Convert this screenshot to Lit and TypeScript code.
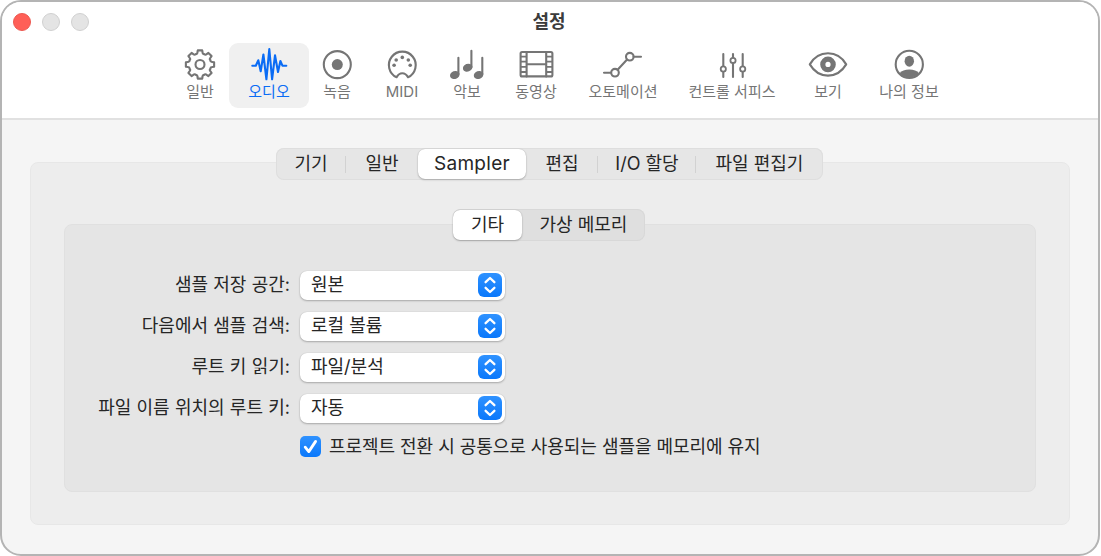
import { LitElement, html, svg, css, nothing } from "lit";
import { customElement, property, state } from "lit/decorators.js";
import { classMap } from "lit/directives/class-map.js";

const polar = (radius: number, deg: number) => {
    const a = (deg - 90) * Math.PI / 180;
    return `${(20 + radius * Math.cos(a)).toFixed(2)} ${(17.5 + radius * Math.sin(a)).toFixed(2)}`;
}

// eight teeth with rounded valleys between them
const gearPath = () => {
    let d = '';
    for (let i = 0; i < 8; i++) {
        const a = i * 45;
        d += `${i ? 'L' : 'M'}${polar(14.3, a - 9)} L${polar(14.3, a + 9)} L${polar(12.3, a + 12)} `;
        d += `Q${polar(10.6, a + 15)} ${polar(11.3, a + 22.5)} Q${polar(10.6, a + 30)} ${polar(12.3, a + 33)} `;
    }
    return d + 'Z';
}

const icons: Record<string, unknown> = {
    general: svg`<path d=${gearPath()}/><circle cx="20" cy="17.5" r="4.5"/>`,
    audio: svg`<path d="M3.3 18.7H6.8L9.3 13.3L11.7 24.3L14.4 7.5L17.4 32.3L20.3 2L23.1 32.3L26 8.3L29 25L31.4 14L33.4 18.7H37.3"/>`,
    record: svg`<circle cx="20.3" cy="17.6" r="13.5"/><circle class="fill" cx="20.3" cy="17.6" r="5.5"/>`,
    midi: svg`
        <path d="M14.6 30.2A13.4 13.4 0 1 1 26 30.2C24.6 27.6 23 26.2 20.3 26.2C17.6 26.2 16 27.6 14.6 30.2Z"/>
        <g class="fill">
            <circle cx="12.1" cy="18.3" r="1.8"/><circle cx="14.2" cy="13" r="1.8"/>
            <circle cx="20.3" cy="10.4" r="1.8"/><circle cx="26.3" cy="13" r="1.8"/>
            <circle cx="28.2" cy="18.3" r="1.8"/>
        </g>`,
    score: svg`
        <path d="M11.4 10.8V27M24.4 3.7V20M35.3 10.8V27"/>
        <g class="fill">
            <ellipse cx="7.8" cy="28" rx="4.9" ry="3.9" transform="rotate(-20 7.8 28)"/>
            <ellipse cx="20.7" cy="20.7" rx="4.9" ry="3.9" transform="rotate(-20 20.7 20.7)"/>
            <ellipse cx="31.6" cy="28" rx="4.9" ry="3.9" transform="rotate(-20 31.6 28)"/>
        </g>`,
    movie: svg`
        <rect x="4.6" y="5" width="31.8" height="24.4" rx="1.5"/>
        <path d="M10.6 5V29.4M30.2 5V29.4M10.6 17.2H30.2"/>
        <path class="thin" d="M5 9.6H10M5 14.6H10M5 19.8H10M5 25H10M31 9.6H36M31 14.6H36M31 19.8H36M31 25H36"/>`,
    automation: svg`
        <path d="M1 25.7H8M14.6 22.8L24.1 12.5M30.6 9.7H38"/>
        <circle cx="12" cy="25.7" r="3.8"/><circle cx="26.8" cy="9.7" r="3.8"/>`,
    surfaces: svg`
        <path d="M11.3 7V18.8M11.3 25V30M21 7V10.2M21 16.4V30M30.7 7V18.8M30.7 25V30"/>
        <circle class="thin" cx="11.3" cy="22" r="2.6"/><circle class="thin" cx="21" cy="13.4" r="2.6"/>
        <circle class="thin" cx="30.7" cy="22" r="2.6"/>`,
    view: svg`
        <path d="M1.8 17.4C5.5 11 12 6.3 20 6.3S34.5 11 38.2 17.4C34.5 23.6 28 28.6 20 28.6S5.5 23.6 1.8 17.4Z"/>
        <circle class="pupil" cx="20" cy="17.4" r="5.2"/>`,
    profile: svg`
        <circle cx="20.3" cy="17.4" r="13.6"/>
        <ellipse class="fill" cx="20.3" cy="14.2" rx="4.7" ry="5.5"/>
        <path class="fill" d="M10.6 26.3C12.5 23.8 16 22.6 20.3 22.6S28.1 23.8 30 26.3A13.2 13.2 0 0 1 10.6 26.3Z"/>`
}

@customElement('segmented-tabs')
export class SegmentedTabs extends LitElement{
    static styles = css`
        :host{
            display: block;
        }

        .track{
            display: grid;
            box-sizing: border-box;
            height: 32px;
            border-radius: 8px;
            background: #e6e6e6;
            box-shadow: inset 0 0 0 1px #dedede;
        }

        .main{
            grid-template-columns: 70px 72px 108px 72px 98px 127px;
        }

        .sub{
            background: #dfdfdf;
            box-shadow: inset 0 0 0 1px #d8d8d8;
            grid-template-columns: 69px 123px;
        }

        .tab{
            margin: 1px 0;
            height: 30px;
            line-height: 29px;
            text-align: center;
            white-space: nowrap;
            cursor: default;
        }

        .latin{
            font-size: 19px;
            letter-spacing: 0.3px;
        }

        .divided{
            background: linear-gradient(#d2d2d2, #d2d2d2) right center / 1px 17px no-repeat;
        }

        .selected{
            background: white;
            border-radius: 7px;
            box-shadow: 0 0 1px rgba(0, 0, 0, 0.25), 0 1px 2px rgba(0, 0, 0, 0.22);
        }
    `

    @property({ attribute: false })
    tabs: string[] = [];

    @property()
    kind = 'main';

    @property({ type: Number })
    selected = 0;

    render() {
        return html`
            <div class="track ${this.kind}">
                ${this.tabs.map((tab, i) => html`
                    <div class=${classMap({
                            tab: true,
                            latin: /^[a-z]+$/i.test(tab),
                            selected: i === this.selected,
                            divided: i !== this.selected && i + 1 !== this.selected && i < this.tabs.length - 1
                         })}
                         @click=${() => this.selected = i}>${tab}</div>
                `)}
            </div>
        `
    }
}

@customElement('popup-row')
export class PopupRow extends LitElement{
    static styles = css`
        :host{
            display: grid;
            grid-template-columns: 225px 205px;
            column-gap: 10px;
            height: 29px;
            line-height: 28px;
        }

        .label{
            text-align: right;
            white-space: nowrap;
            word-spacing: 0.2px;
        }

        .popup{
            display: flex;
            justify-content: space-between;
            box-sizing: border-box;
            padding: 2px 3px 3px 11px;
            border-radius: 7px;
            background: white;
            box-shadow: 0 0 1px rgba(0, 0, 0, 0.2), 0 1px 2px rgba(0, 0, 0, 0.25);
        }

        .value{
            line-height: 24px;
        }

        svg{
            width: 24px;
            height: 24px;
            border-radius: 6px;
            background: linear-gradient(#2f92ff, #0a78fb);
            fill: none;
            stroke: white;
            stroke-width: 2.3;
            stroke-linecap: round;
            stroke-linejoin: round;
        }
    `

    @property()
    label!: string;

    @property()
    value!: string;

    render() {
        return html`
            <div class="label">${this.label}:</div>
            <div class="popup">
                <span class="value">${this.value}</span>
                <svg viewBox="0 0 24 24"><path d="M7.6 9.2L12 5L16.4 9.2M7.6 14.8L12 19L16.4 14.8"/></svg>
            </div>
        `
    }
}

@customElement('app-root')
export class AppRoot extends LitElement{
    static styles = css`
        :host{
            display: block;
            width: 1101px;
            height: 556px;
            background: white;
            font-family: Inter, "Noto Sans CJK KR", sans-serif;
            font-size: 18px;
            color: #262626;
            user-select: none;
        }

        .window{
            display: flex;
            flex-direction: column;
            box-sizing: border-box;
            width: 1100px;
            height: 556px;
            border: 2px solid #b4b4b4;
            border-radius: 21px;
            background: #f5f5f5;
            overflow: hidden;
        }

        header{
            flex: none;
            box-sizing: border-box;
            height: 118px;
            background: white;
            border-bottom: 2px solid #e1e1e1;
        }

        .titlebar{
            display: grid;
            grid-template-columns: 1fr auto 1fr;
            align-items: center;
            height: 40px;
            padding: 0 13px 0 11px;
        }

        .lights{
            display: flex;
            gap: 11px;
        }

        .light{
            box-sizing: border-box;
            width: 18px;
            height: 18px;
            border-radius: 50%;
            background: #e4e4e4;
            border: 1px solid #d0d0d0;
        }

        .close{
            background: #ff5f57;
            border-color: #ec5850;
        }

        h1{
            margin: 0;
            font-size: 18px;
            line-height: 24px;
            font-weight: 700;
            color: #3c3c3c;
        }

        nav{
            display: grid;
            grid-template-columns: 58px 80px 56px 74px 56px 82px 92px 126px 66px 96px;
            padding: 1px 0 0 169px;
        }

        .item{
            display: flex;
            flex-direction: column;
            align-items: center;
            box-sizing: border-box;
            height: 65px;
            padding-top: 4px;
            border-radius: 9px;
            font-size: 15px;
            line-height: 22px;
            color: #757575;
            white-space: nowrap;
        }

        .item svg{
            width: 40px;
            height: 34px;
            fill: none;
            stroke: currentColor;
            stroke-width: 2.1;
            stroke-linecap: round;
            stroke-linejoin: round;
        }

        .item .fill{
            fill: currentColor;
            stroke: none;
        }

        .item .thin{
            stroke-width: 1.8;
        }

        .item .pupil{
            stroke-width: 5.2;
        }

        .active{
            background: #f0f0f0;
            color: #0a6cf5;
        }

        main{
            padding: 42px 28px 0;
        }

        .outer, .inner{
            display: flex;
            flex-direction: column;
            align-items: center;
            box-sizing: border-box;
            border-radius: 8px;
        }

        .outer{
            height: 363px;
            padding: 0 33px;
            background: #ededed;
            border: 1px solid #e7e7e7;
        }

        .inner{
            align-self: stretch;
            height: 268px;
            margin-top: 44px;
            background: #e5e5e5;
            border: 1px solid #e0e0e0;
        }

        /* tab bars straddle the top edge of their panel */
        .main-tabs{
            margin: -15px 1px 0 0;
        }

        .sub-tabs{
            margin: -16px 2px 0 0;
        }

        .form{
            display: flex;
            flex-direction: column;
            gap: 12px;
            align-self: flex-start;
            margin-top: 30px;
        }

        .check{
            display: flex;
            gap: 8px;
            margin: 1px 0 0 235px;
            height: 21px;
            line-height: 22px;
            white-space: nowrap;
            letter-spacing: -0.04px;
        }

        .check svg{
            width: 21px;
            height: 21px;
            border-radius: 5px;
            background: linear-gradient(#2f92ff, #0a78fb);
            fill: none;
            stroke: white;
            stroke-width: 2.8;
            stroke-linecap: round;
            stroke-linejoin: round;
        }
    `

    @state()
    active = 'audio';

    @state()
    keepSamples = true;

    toolbar = [
        ['general', '일반'],
        ['audio', '오디오'],
        ['record', '녹음'],
        ['midi', 'MIDI'],
        ['score', '악보'],
        ['movie', '동영상'],
        ['automation', '오토메이션'],
        ['surfaces', '컨트롤 서피스'],
        ['view', '보기'],
        ['profile', '나의 정보']
    ]

    mainTabs = ['기기', '일반', 'Sampler', '편집', 'I/O 할당', '파일 편집기']

    subTabs = ['기타', '가상 메모리']

    rows = [
        ['샘플 저장 공간', '원본'],
        ['다음에서 샘플 검색', '로컬 볼륨'],
        ['루트 키 읽기', '파일/분석'],
        ['파일 이름 위치의 루트 키', '자동']
    ]

    render() {
        return html`
            <div class="window">
                <header>
                    <div class="titlebar">
                        <div class="lights">
                            <span class="light close"></span>
                            <span class="light"></span>
                            <span class="light"></span>
                        </div>
                        <h1>설정</h1>
                    </div>
                    <nav>
                        ${this.toolbar.map(([id, label]) => html`
                            <div class=${classMap({ item: true, active: id === this.active })}
                                 @click=${() => this.active = id}>
                                <svg viewBox="0 0 40 34">${icons[id]}</svg>
                                <span>${label}</span>
                            </div>
                        `)}
                    </nav>
                </header>
                <main>
                    <div class="outer">
                        <segmented-tabs class="main-tabs" .tabs=${this.mainTabs} selected="2"></segmented-tabs>
                        <div class="inner">
                            <segmented-tabs class="sub-tabs" kind="sub" .tabs=${this.subTabs}></segmented-tabs>
                            <div class="form">
                                ${this.rows.map(([label, value]) => html`
                                    <popup-row .label=${label} .value=${value}></popup-row>
                                `)}
                                <div class="check" @click=${() => this.keepSamples = !this.keepSamples}>
                                    <svg viewBox="0 0 21 21">
                                        ${this.keepSamples ? svg`<path d="M5.2 11.2L8.8 15.6L15.6 5.4"/>` : nothing}
                                    </svg>
                                    <span>프로젝트 전환 시 공통으로 사용되는 샘플을 메모리에 유지</span>
                                </div>
                            </div>
                        </div>
                    </div>
                </main>
            </div>
        `
    }
}

declare global {
    interface HTMLElementTagName {
        'app-root': AppRoot;
        'segmented-tabs': SegmentedTabs;
        'popup-row': PopupRow;
    }
}
